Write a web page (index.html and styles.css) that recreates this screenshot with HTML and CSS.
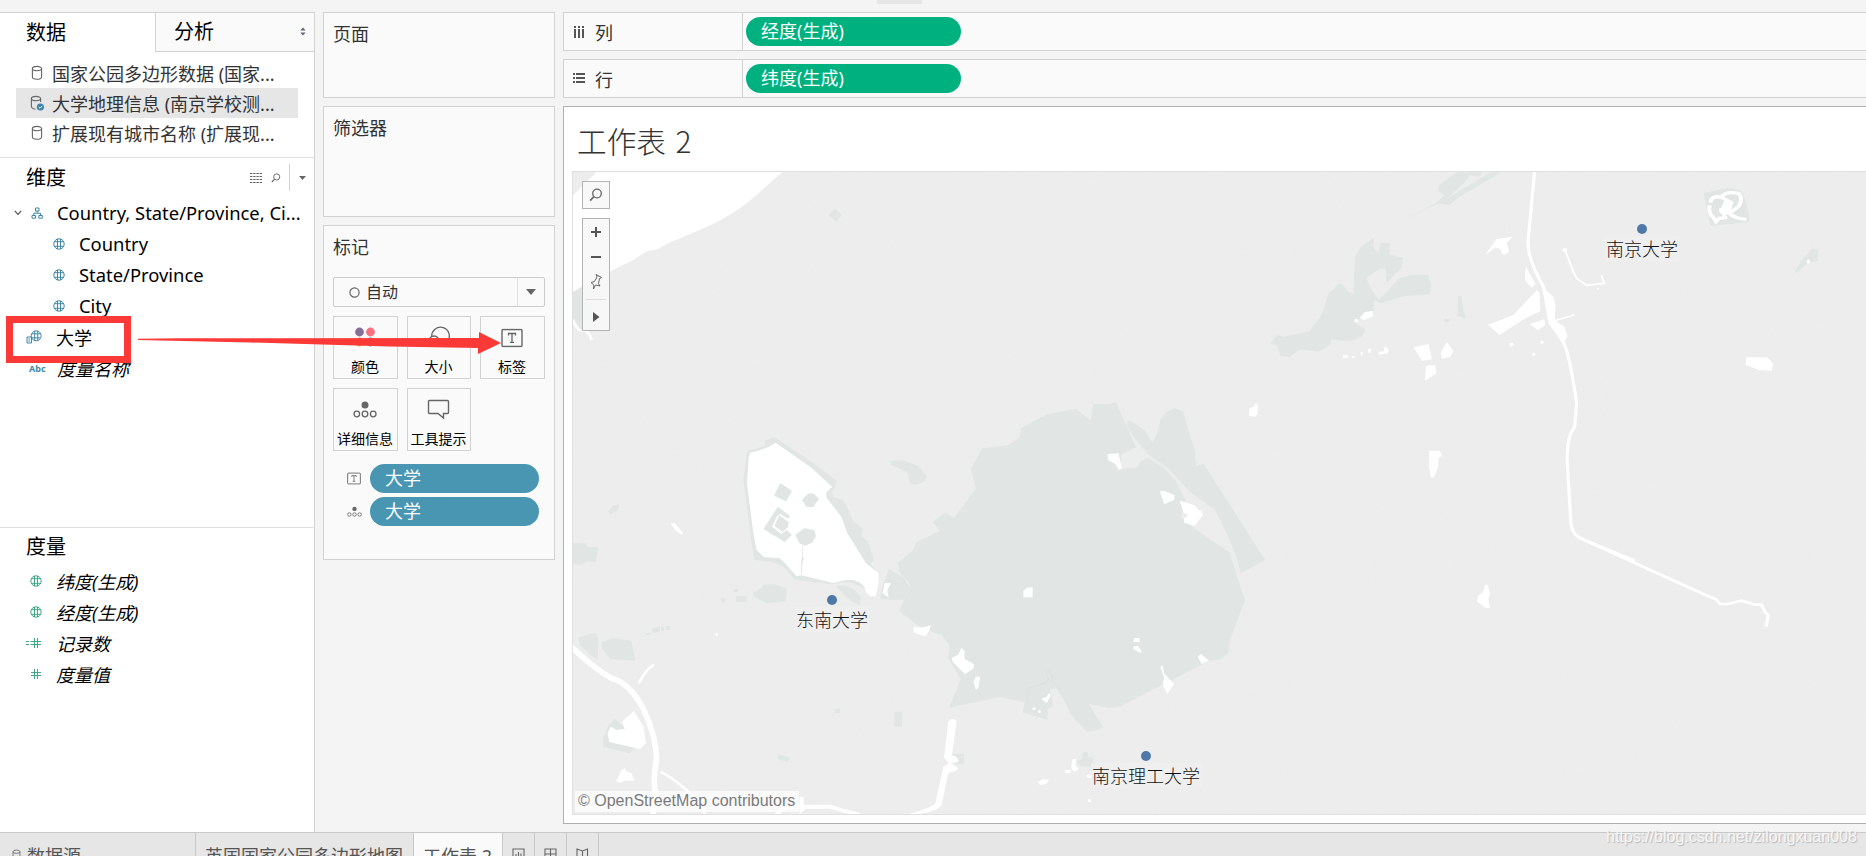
FILE: index.html
```html
<!DOCTYPE html>
<html lang="zh-CN">
<head>
<meta charset="utf-8">
<title>工作表 2</title>
<link rel="stylesheet" href="styles.css">
</head>
<body>
<svg class="defs" width="0" height="0">
  <defs>
    <symbol id="globe" viewBox="0 0 12 12"><g fill="none" stroke="currentColor" stroke-width="1"><circle cx="6" cy="6" r="5.2"/><path d="M1.6 3.7H10.4M1.6 8.3H10.4M4.5 .9V11.1M7.5 .9V11.1"/></g></symbol>
    <symbol id="db" viewBox="0 0 12 16"><g fill="none" stroke="#666" stroke-width="1.1"><ellipse cx="6" cy="3.6" rx="4.6" ry="2.2"/><path d="M1.4 3.6V12C1.4 15 10.6 15 10.6 12V3.6"/></g></symbol>
    <symbol id="hash" viewBox="0 0 12 12"><path d="M4.5 1V11M7.5 1V11M1 4.5H11M1 7.5H11" stroke="currentColor" fill="none"/></symbol>
    <symbol id="tbox" viewBox="0 0 22 19"><rect x="1" y="1" width="20" height="17" rx="1" fill="none" stroke="#666" stroke-width="1.4"/><path d="M7.5 7V5H14.5V7M11 5V13.6M9 13.8H13" fill="none" stroke="#666" stroke-width="1.3"/></symbol>
    <symbol id="dots" viewBox="0 0 24 18"><circle cx="12" cy="4" r="3.5" fill="#666"/><g fill="none" stroke="#666" stroke-width="1.3"><circle cx="3.8" cy="13" r="2.8"/><circle cx="12" cy="13" r="2.8"/><circle cx="20.2" cy="13" r="2.8"/></g></symbol>
    <symbol id="search" viewBox="0 0 14 14"><g fill="none" stroke="#666"><circle cx="8" cy="5.5" r="4.3" stroke-width="1.3"/><path d="M5 8.5L1.2 12.6" stroke-width="1.6"/></g></symbol>
  </defs>
</svg>
<div class="app">
  <div class="workspace">
    <aside class="data-pane">
      <div class="pane-tabs">
        <div class="pane-tab">数据</div>
        <div class="pane-tab pane-tab-off">分析
          <svg class="sorter" width="6" height="9" viewBox="0 0 6 9"><path d="M3 .5L5.7 3.6H.3ZM3 8.5L5.7 5.4H.3Z" fill="#5f6b78"/></svg>
        </div>
      </div>
      <ul class="sources">
        <li><svg class="db"><use href="#db"/></svg>国家公园多边形数据 (国家...</li>
        <li class="selected"><svg class="db" viewBox="0 0 14 16"><path d="M10.6 7V3.6M1.4 3.6V12Q2.6 14.2 5.4 14.2" fill="none" stroke="#666" stroke-width="1.1"/><ellipse cx="6" cy="3.6" rx="4.6" ry="2.2" fill="none" stroke="#666" stroke-width="1.1"/><circle cx="10.4" cy="12" r="3.6" fill="#3b84a9"/><path d="M8.6 12L10 13.3L12.3 10.8" fill="none" stroke="#fff"/></svg>大学地理信息 (南京学校测...</li>
        <li><svg class="db"><use href="#db"/></svg>扩展现有城市名称 (扩展现...</li>
      </ul>
      <section class="dimensions">
        <header class="section-head">
          <h2>维度</h2>
          <svg class="grid-icon" width="12" height="10" viewBox="0 0 12 10"><path d="M0 .5H12M0 3.5H12M0 6.5H12M0 9.5H12" stroke="#666" stroke-dasharray="2.4 .8"/></svg>
          <svg class="find-icon" width="10" height="10"><use href="#search"/></svg>
          <i class="rule"></i>
          <svg class="caret" width="7" height="4" viewBox="0 0 7 4"><path d="M0 0H7L3.5 4Z" fill="#666"/></svg>
        </header>
        <ul class="fields latin">
          <li class="group"><svg class="chevron" width="8" height="6" viewBox="0 0 8 6"><path d="M.8 .8L4 4.4L7.2 .8" fill="none" stroke="#555" stroke-width="1.2"/></svg><svg class="tree" width="12" height="12" viewBox="0 0 12 12"><path d="M4.5 1H8V4H4.5ZM1 8.5H4.5V11.2H1ZM7.8 8.5H11.3V11.2H7.8ZM6.2 4V6.2M2.8 8.5V6.2H9.5V8.5" fill="none" stroke="#3f88a8"/></svg><span>Country, State/Province, Ci...</span></li>
          <li class="child"><svg class="ico"><use href="#globe"/></svg><span>Country</span></li>
          <li class="child"><svg class="ico"><use href="#globe"/></svg><span>State/Province</span></li>
          <li class="child"><svg class="ico"><use href="#globe"/></svg><span>City</span></li>
          <li class="school"><svg width="16" height="14" viewBox="0 0 16 14"><g fill="none" stroke="currentColor"><circle cx="10.2" cy="5.8" r="5"/><path d="M5.8 3.8H14.6M6 7.8H14.4M8.700 1V10.6M11.700 1V10.6"/><path d="M1 7H5.5V13H1Z" fill="#fff"/><path d="M2.3 9H4.2M2.3 11H4.2"/></g></svg><span>大学</span></li>
          <li class="names"><b>Abc</b><span>度量名称</span></li>
        </ul>
      </section>
      <section class="measures">
        <h2>度量</h2>
        <ul class="fields">
          <li><svg class="ico"><use href="#globe"/></svg><span>纬度(生成)</span></li>
          <li><svg class="ico"><use href="#globe"/></svg><span>经度(生成)</span></li>
          <li><svg class="ico wide" viewBox="0 0 16 12"><path d="M0 4.5H3M0 7.5H3M8.5 1V11M11.5 1V11M4.5 4.5H15M4.5 7.5H15" stroke="currentColor" fill="none"/></svg><span>记录数</span></li>
          <li><svg class="ico"><use href="#hash"/></svg><span>度量值</span></li>
        </ul>
      </section>
    </aside>

    <div class="cards">
      <section class="card pages">页面</section>
      <section class="card filters">筛选器</section>
      <section class="card marks">
        <h3>标记</h3>
        <div class="mark-type">
          <div class="mark-value"><svg width="11" height="11"><circle cx="5.5" cy="5.5" r="4.6" fill="none" stroke="#666" stroke-width="1.2"/></svg>自动</div>
          <svg class="mark-caret" width="10" height="6" viewBox="0 0 10 6"><path d="M0 0H10L5 6Z" fill="#666"/></svg>
        </div>
        <div class="mark-grid">
          <div class="mark-btn"><svg width="24" height="22"><circle cx="6.5" cy="6" r="4.4" fill="#86709b"/><circle cx="17.5" cy="6" r="4.4" fill="#f9707f"/><circle cx="6.5" cy="16" r="4.4" fill="#f6a04d"/><circle cx="17.5" cy="16" r="4.4" fill="#7087b5"/></svg>颜色</div>
          <div class="mark-btn"><svg width="24" height="22"><path d="M4.8 11A8.8 8.8 0 1 1 20 16" fill="none" stroke="#666" stroke-width="1.3"/><circle cx="7" cy="15" r="5" fill="none" stroke="#666" stroke-width="1.3"/></svg>大小</div>
          <div class="mark-btn"><svg width="22" height="22" viewBox="0 -2.5 22 22"><use href="#tbox" width="22" height="19"/></svg>标签</div>
          <div class="mark-btn"><svg width="24" height="22"><use href="#dots" y="3" width="24" height="18"/></svg>详细信息</div>
          <div class="mark-btn"><svg width="24" height="22"><path d="M2.5 2.5H20.5Q21.5 2.5 21.5 3.5V14.5Q21.5 15.5 20.5 15.5H16.5V20L11 15.5H2.5Q1.5 15.5 1.5 14.5V3.5Q1.5 2.5 2.5 2.5Z" fill="none" stroke="#666" stroke-width="1.4"/></svg>工具提示</div>
        </div>
        <div class="mark-pills">
          <div class="mark-row"><svg width="14" height="13"><use href="#tbox"/></svg><div class="pill blue">大学</div></div>
          <div class="mark-row"><svg width="15" height="12"><use href="#dots"/></svg><div class="pill blue">大学</div></div>
        </div>
      </section>
    </div>

    <main class="main">
      <div class="shelf">
        <div class="shelf-name"><svg width="12" height="12"><path d="M2 0V2M6 0V2M10 0V2M2 3V12M6 3V12M10 3V12" stroke="#555" stroke-width="2"/></svg>列</div>
        <div class="pill green">经度(生成)</div>
      </div>
      <div class="shelf">
        <div class="shelf-name"><svg width="12" height="12"><path d="M0 1H2M0 5H2M0 9H2M3 1H12M3 5H12M3 9H12" stroke="#555" stroke-width="2"/></svg>行</div>
        <div class="pill green">纬度(生成)</div>
      </div>
      <section class="sheet">
        <h1>工作表 2</h1>
        <div class="map">
          <svg class="map-svg" width="1293" height="642" viewBox="573 172 1293 642">
            <defs>
              <filter id="grain" x="0" y="0" width="100%" height="100%"><feTurbulence type="fractalNoise" baseFrequency=".35" numOctaves="2" seed="4"/><feColorMatrix values="0 0 0 0 .8  0 0 0 0 .82  0 0 0 0 .82  1.8 0 0 0 -.95"/></filter>
            </defs>
            <rect x="573" y="172" width="1293" height="642" fill="#ededed"/>
            <rect x="573" y="172" width="1293" height="642" filter="url(#grain)" opacity=".5"/>
            <!-- north-west -->
            <g transform="translate(555 0) scale(.33333)">
              <path class="w" d="M125 516H682L590 598Q540 640 470 674L335 732L308 748L275 754L235 780L185 804L100 850L50 878V590Z"/>
              <path class="p" d="M54 876L84 858L110 850V990H80L54 955ZM838 626L861 644L844 665L821 646Z"/>
              <path class="l" stroke-width="8" d="M54 960Q65 995 85 992Q100 990 110 1020"/>
            </g>
            <!-- west and lake -->
            <g transform="translate(560 400) scale(.33333)">
              <path class="p" d="M562 153L615 138L613 122L642 112L660 122L755 186L830 242L826 260L816 274L820 292L850 300L880 362L908 388L905 408L924 425L942 482L930 490L958 525L954 560L938 597L918 570Q885 545 852 546L816 553L705 540L668 497L645 488L583 479L575 430L550 240Z"/>
              <path class="w" d="M570 158Q610 152 647 128L755 204L816 260L798 278L800 294L845 352L862 400L918 490L956 520V550L947 588L933 591L917 575Q915 550 880 540L857 540L820 549L725 526L709 528L675 490L658 474L612 472L590 450L580 400L561 250L566 175Z"/>
              <path class="p" d="M661 249L696 273L678 304L642 287ZM654 320L690 348L684 356L660 341L650 350L636 380L664 403L680 390L696 404L674 426L610 387ZM658 346L686 366L684 382L668 395L643 378ZM725 302L740 284Q755 276 765 284L778 298Q765 310 761 321Q750 322 738 320Q733 306 725 302ZM706 404L733 385L763 390L768 408L757 428L735 437L718 430ZM727 437V470L724 480L723 525H725L728 482L732 476L729 468V437Z"/>
              <path class="p" d="M990 183L1028 180L1076 198L1101 230Q1095 250 1062 255L1048 245L1044 218L994 195ZM828 558Q880 550 903 595L900 616Q870 605 848 580ZM987 508L1030 532L1048 560L1030 600L960 597L972 545Z"/>
              <path class="p" d="M38 428L75 430L85 441L115 442L107 486L80 485L62 495L38 492ZM145 334L158 318L175 313L178 324L169 334L150 342ZM55 712L106 698L114 710V780L92 766L58 732ZM126 727L160 714L214 722L226 782L150 777L127 746ZM579 578L605 564L610 553H645L665 561L680 566L678 605L622 610L585 592ZM528 588H560V606H528ZM481 595L492 592L498 602L488 610ZM523 567H534V576H523ZM275 684L300 681V696L278 699ZM303 681H312V692H303ZM318 678H331V690H318ZM257 699H272V705H257ZM1003 935H1026V980H1003ZM823 926H840V939H823ZM657 1063L688 1074L685 1086L653 1077ZM1175 1062H1212V1093H1185ZM146 975L165 957L250 1035L225 1040L210 1060L130 1040V1012Z"/>
              <path class="w" d="M152 980L170 990L194 986L186 965L221 933L250 978L258 1030L240 1047L190 1036L148 1026L143 1000ZM168 1144L185 1110L194 1104L200 1115L214 1120L224 1142H194L182 1148ZM332 370H344L369 398L365 405L345 390ZM466 700L474 699L473 708L466 707ZM974 549H993L982 570L986 593L968 580Z"/>
              <path class="l" stroke-width="17" stroke-linejoin="round" d="M34 740Q95 800 155 835Q210 850 252 930Q289 1010 290 1080Q278 1130 286 1180L278 1250"/>
              <path class="l" stroke-width="8" d="M236 850Q260 805 282 795M302 1115Q350 1140 400 1190L432 1200V1245"/>
              <path class="l" stroke-width="12" d="M650 1245Q670 1218 705 1220H810L850 1232L900 1245M725 1190V1230L738 1218"/>
              <path class="w" d="M1165 964Q1180 950 1190 964L1176 1066Q1194 1068 1196 1086L1172 1089L1194 1104Q1190 1115 1165 1118L1145 1216Q1125 1242 1040 1244Q1120 1222 1126 1210L1150 1100L1166 1090L1152 1073Z"/>
            </g>
            <!-- Purple Mountain park -->
            <g transform="translate(900 380) scale(.33333)">
              <path class="p" d="M580 72H628L648 66L708 202L666 222L660 268L712 262L722 244L742 233L790 262L826 300L856 360L842 412L890 450L988 517L1035 661L990 780L984 820L962 838L926 844L808 904L740 938L660 980L625 984L566 972L609 1040L600 1048L562 1056L515 1008L490 957L470 925L450 926L460 980L445 984L442 1020L368 997L374 967L300 951L147 983L182 898L145 835L149 796L125 766L60 742L-2 694L30 612L-2 575L-14 494L35 516L50 486L120 452L97 425L136 398L162 414L228 325L212 267L247 205L325 196L358 172L364 144L436 104L528 86L572 122Z"/>
              <path class="p" d="M682 122L696 124L735 152L757 188Q774 165 781 120L800 96L823 84L850 95L862 140L876 185L885 210L888 258L911 252L1096 541L1022 580L1010 530L980 460L945 390L870 336L806 266L742 222L700 168L682 138ZM548 1116H564V1132H578V1160H545L528 1144L546 1138Z"/>
              <path d="M-14 490L36 514L-14 553Z" fill="#ededed"/>
              <path d="M383 970V926L438 908L445 898L438 875L446 866L455 884V904L480 928" fill="none" stroke="#d8dedd" stroke-width="2"/>
              <path class="w" d="M623 222L655 220L666 265L656 270L646 252L624 240ZM780 334L792 332L824 346L822 360L792 373ZM840 362L884 376L895 390H904L908 406L884 438L852 428V415L866 406L850 397ZM370 632L382 623L398 622V652H370ZM40 742L70 742L92 736L88 752L76 769L42 758ZM156 833L174 824L184 804L194 813L193 836L222 853L220 866L195 882L158 846ZM227 890L240 890L236 922L228 930L220 908ZM424 957L440 950L447 938L452 946L440 970ZM397 984L405 981L407 989L398 991ZM413 993L420 990L424 997L417 1000ZM703 774H718L719 786H700ZM700 800L714 798L725 814L722 819L700 808ZM781 862L788 855L792 880L822 912L802 942L788 915L792 890ZM893 830L903 822L927 842L905 852ZM1048 92L1060 86L1064 72L1074 74L1072 104L1062 110L1048 107ZM516 1138L529 1136L526 1156L536 1166L524 1176L514 1165ZM495 1170H512V1179H495Z"/>
            </g>
            <!-- north-east -->
            <g transform="translate(1240 160) scale(.39936 .33333)">
              <path class="p" d="M336 232L334 262L346 280L352 248L376 249L374 282L392 290L408 292L405 322L368 368L364 326L352 324L316 354L330 390L348 420L400 354L428 345L470 344L478 370L476 403L412 408L352 430L336 420L334 452L300 475L290 490L314 508L306 530L276 544L228 538L226 556L196 575L150 568L125 592L102 588L92 558L76 550L92 526L110 530L175 513L205 462L222 400L252 368L272 396L300 408L284 400L288 290L302 262ZM545 408H555L560 455L566 476L545 468ZM512 476H525V487H512Z"/>
              <path class="p" d="M410 180L438 162L490 130L512 106L495 92L500 74L530 46L548 34H608L600 50L575 46L560 70L518 116L628 36H655L548 112L524 136L500 130L466 146ZM1161 100L1218 84L1254 90Q1275 135 1275 185L1178 198ZM1387 340L1408 298L1435 263L1448 270L1446 302L1420 310L1400 334Z"/>
              <path class="l" stroke-width="10" d="M1178 128Q1180 105 1205 112Q1215 92 1248 100Q1262 115 1248 140L1225 160Q1240 176 1268 178M1176 136Q1172 160 1185 172L1192 185L1200 175L1220 172M1206 112L1230 128L1216 150L1200 150"/>
              <path class="w" d="M1214 120L1235 130L1228 155L1212 170L1200 155ZM1418 304L1424 297L1428 306L1422 312Z"/>
              <path class="l" stroke-width="8" stroke-linejoin="round" d="M738 30L722 235Q716 290 760 380L775 480L810 548Q825 580 843 730L838 800Q815 835 820 920L829 1095Q835 1130 860 1138L990 1203"/>
              <path class="w" d="M715 318L740 372L730 384L714 360ZM744 390L750 400L752 454L715 475L650 525L621 494L684 466ZM762 386L784 410L790 435L788 480L812 500L820 528L810 550L772 490ZM726 492L762 478L764 496L746 511ZM614 284L642 238L682 230L668 248L674 275L660 286L650 266L640 262ZM300 474L312 457L332 452L334 468L312 480ZM434 562L472 552L481 598L456 602ZM503 576L518 546L534 574L526 590L505 597ZM466 618L488 615L492 640L463 662ZM674 550L682 547L687 555L678 561ZM752 544L758 542L761 549L754 552ZM731 580H739V587H731ZM24 744L36 740L42 732L44 748L40 770L22 766ZM474 872H500L506 886L497 895L496 920L486 952H478L473 920ZM1268 592L1320 592L1335 610L1332 632L1300 630L1266 614ZM258 586H270V594H258ZM281 588H287V594H281ZM302 577H308V584H302ZM321 567H328V578H321ZM346 576L360 574L362 558L373 570L370 580L348 584ZM287 477H295V487H287Z"/>
              <path class="l" stroke-width="5" d="M813 265Q828 320 843 355L868 376L912 370L905 345M780 485L837 464M894 386H899"/><circle class="w" cx="813" cy="270" r="6"/>
            </g>
            <!-- south-east -->
            <g transform="translate(1240 540) scale(.39936 .33333)">
              <path class="l" stroke-width="8" d="M858 -2L1160 162L1192 178L1202 192H1222L1256 182L1290 194H1306L1314 215L1323 226L1317 260"/>
              <path class="w" d="M613 135H620L626 160L622 178L626 203L616 204L594 185L596 167L609 157Z"/>
            </g>
            <path class="w" d="M1038 782L1043 779L1049 780L1046 784L1040 785ZM1087 775H1091V778H1087ZM1088 799H1091V802H1088Z"/>
            <g fill="#efefef"><rect x="795" y="607" width="74" height="25"/><rect x="1605" y="236" width="74" height="25"/><rect x="1091" y="763" width="111" height="25"/></g>
            <g fill="#4e79a7"><circle cx="832" cy="600" r="5"/><circle cx="1642" cy="229" r="5"/><circle cx="1146" cy="756" r="5"/></g>
            <g class="map-label"><text x="832" y="627">东南大学</text><text x="1642" y="256">南京大学</text><text x="1146" y="783">南京理工大学</text></g>
          </svg>
          <div class="map-tools">
            <div class="tool-box"><svg width="14" height="14"><use href="#search"/></svg></div>
            <div class="tool-box zoomers">
              <svg width="26" height="111" viewBox="0 0 26 111"><path d="M8 13H18M13 8V18M8 38H18" stroke="#555" stroke-width="2"/><path d="M13 55.5L18.5 58.5L16.5 59.5L15.5 64.5L17 67L12.5 66L10.5 70L10.8 66L8 63.5L11.5 62.5L14 58Z" fill="none" stroke="#666"/><path d="M3 80.5H23" stroke="#ddd"/><path d="M10 93L16.5 98L10 103Z" fill="#555"/></svg>
            </div>
          </div>
          <div class="credit">© OpenStreetMap contributors</div>
        </div>
      </section>
    </main>
  </div>

  <footer class="sheet-tabs">
    <div class="st source-tab"><svg width="9" height="14" viewBox="0 0 12 16"><use href="#db"/></svg>数据源</div>
    <div class="st uk-tab">英国国家公园多边形地图</div>
    <div class="st active-tab">工作表 2</div>
    <div class="st add-tab"><svg width="13" height="13"><path d="M12 9V1H1V12H8M4 9V6M6.5 9V4M9 9V5.5M9 11.5H13M11 9.5V13" fill="none" stroke="#666" stroke-width="1.1"/></svg></div>
    <div class="st add-tab"><svg width="13" height="13"><path d="M12 8V1H1V11H8M1 6H12M6.5 1V11M9 11.5H13M11 9.5V13" fill="none" stroke="#666" stroke-width="1.1"/></svg></div>
    <div class="st add-tab"><svg width="13" height="13"><path d="M11.5 8V1L6.5 3L1 1V11L6.5 12V3M9 11.5H13M11 9.5V13" fill="none" stroke="#666" stroke-width="1.1"/></svg></div>
  </footer>

  <i class="top-handle"></i>
  <i class="red-frame"></i>
  <svg class="red-arrow" width="364" height="24" viewBox="138 331 364 24"><path d="M138 338.8L180 338.3L479 338V332L501 343L478 354V348L390 346.5L250 342.5L138 340Z" fill="#fb3a38"/></svg>
  <div class="watermark">https://blog.csdn.net/zilongxuan008</div>
</div>
</body>
</html>
```
FILE: styles.css
```css
* { box-sizing: border-box; }
html, body { margin: 0; height: 856px; overflow: hidden; }
body { font-family: "Noto Sans", "Noto Sans CJK SC", sans-serif; font-size: 18px; color: #333; background: #f4f4f4; }
ul { list-style: none; margin: 0; padding: 0; }
h1, h2, h3 { margin: 0; font-weight: 400; }
svg { display: block; flex: none; }
.defs { position: absolute; }
.app { position: relative; height: 856px; overflow: hidden; }
.workspace { display: flex; height: 832px; padding-top: 12px; }

.data-pane { width: 315px; flex: none; display: flex; flex-direction: column; background: #fff; border-top: 1px solid #d2d2d2; border-right: 1px solid #d2d2d2; }
.pane-tabs { display: flex; height: 39px; font-size: 20px; line-height: 40px; color: #000; }
.pane-tab { width: 155px; padding-left: 26px; }
.pane-tab-off { width: 159px; display: flex; align-items: center; justify-content: space-between; padding: 0 8px 0 18px; background: #fafafa; border-left: 1px solid #d2d2d2; border-bottom: 1px solid #d2d2d2; }
.sorter { margin-top: -2px; }
.sources { height: 105px; padding: 6px 16px 0; }
.sources li { display: flex; align-items: center; height: 30px; padding-left: 14px; gap: 8px; white-space: nowrap; }
.sources .selected { background: #e6e6e6; }
.db { width: 14px; height: 16px; }
.dimensions { height: 370px; border-top: 1px solid #e0e0e0; color: #000; }
.section-head { display: flex; align-items: center; height: 39px; padding: 0 8px 0 26px; }
h2 { font-size: 20px; line-height: 40px; color: #000; }
.grid-icon { margin-left: auto; }
.find-icon { margin-left: 9px; }
.rule { width: 1px; height: 27px; margin: 0 9px 0 8px; background: #d2d2d2; }
.fields li { display: flex; align-items: center; height: 31.1px; padding-left: 31px; color: #000; white-space: nowrap; }
.fields .ico { width: 12px; height: 12px; margin-right: 14px; }
.latin { font-size: 18.4px; }
.dimensions .fields svg { color: #3f88a8; }
.dimensions .group { padding-left: 14px; }
.chevron { margin-right: 9px; }
.tree { margin-right: 14px; }
.dimensions .child { padding-left: 53px; }
.dimensions .school { padding-left: 26px; gap: 14px; font-size: 18px; }
.dimensions .names { padding-left: 29px; font-size: 18px; }
.names b { width: 28px; font-size: 9px; color: #3f88a8; }
.names span, .measures span { font-style: italic; }
.measures { flex: 1; border-top: 1px solid #e0e0e0; }
.measures h2 { padding-left: 26px; line-height: 37px; }
.measures .fields li { padding-left: 30px; }
.measures .fields svg { color: #3fa985; }
.measures .fields .wide { width: 16px; margin-left: -4px; }

.cards { width: 232px; margin: 0 8px; flex: none; display: flex; flex-direction: column; gap: 8px; }
.card { padding: 8px 9px 9px; border: 1px solid #d2d2d2; background: #fafafa; line-height: 27px; }
.pages { height: 86px; }
.filters { height: 111px; }
.marks { height: 335px; }
h3 { font-size: 18px; line-height: 27px; }
.mark-type { display: flex; align-items: center; height: 30px; margin-top: 16px; border: 1px solid #ccc; border-radius: 2px; font-size: 16px; }
.mark-value { display: flex; align-items: center; width: 186px; height: 28px; gap: 6px; padding-left: 15px; border-right: 1px solid #e0e0e0; }
.mark-caret { margin: 0 8px; }
.mark-grid { display: grid; grid-template-columns: 65px 64px 65px; gap: 9px; margin-top: 9px; }
.mark-btn { display: flex; flex-direction: column; align-items: center; height: 63px; padding: 9px 1px 0 0; border: 1px solid #d2d2d2; font-size: 14px; line-height: 20px; gap: 9px; color: #000; white-space: nowrap; }
.mark-pills { display: flex; flex-direction: column; gap: 4px; margin-top: 13px; padding-left: 14px; }
.mark-row { display: flex; align-items: center; justify-content: space-between; padding-right: 6px; }
.pill { height: 29px; border-radius: 15px; padding-left: 15px; line-height: 28px; color: #fff; }
.blue { width: 169px; background: #4996b2; }
.green { width: 215px; margin-left: 3px; background: #00b180; }

.main { flex: 1; min-width: 0; display: flex; flex-direction: column; gap: 8px; }
.shelf { display: flex; align-items: center; height: 39px; background: #fafafa; border: 1px solid #d2d2d2; border-right: 0; }
.shelf-name { display: flex; align-items: center; width: 179px; height: 37px; padding-left: 9px; gap: 10px; border-right: 1px solid #d2d2d2; }
.sheet { height: 718px; padding: 0 0 0 8px; background: #fff; border: 1px solid #b0b0b0; border-right: 0; }
h1 { height: 64px; padding-left: 5px; font-family: "Noto Sans CJK SC", sans-serif; font-size: 29.7px; font-weight: 300; line-height: 68px; word-spacing: 3px; color: #333; }
.map { position: relative; height: 644px; border: 1px solid #e0e0e0; border-right: 0; overflow: hidden; }
.p { fill: #e1e6e4; }
.w { fill: #fff; }
.l { fill: none; stroke: #fff; }
.map-label { font-family: "Noto Sans CJK SC", sans-serif; font-size: 18px; font-weight: 300; text-anchor: middle; fill: #111; }
.map-tools { position: absolute; left: 9px; top: 9px; display: flex; flex-direction: column; gap: 9px; }
.tool-box { display: flex; align-items: center; justify-content: center; width: 28px; height: 28px; border: 1px solid #b4b4b4; background: rgba(247, 247, 247, .9); }
.zoomers { height: 113px; }
.credit { position: absolute; left: 2px; bottom: 2px; width: 224px; height: 21px; padding-left: 3px; font: 16px/19px "Liberation Sans", Arial, sans-serif; color: #7b7b7b; background: rgba(255, 255, 255, .7); white-space: nowrap; }

.sheet-tabs { display: flex; height: 44px; border-top: 1px solid #c8c8c8; background: #e6e6e6; color: #555; white-space: nowrap; }
.st { display: flex; align-items: center; border-right: 1px solid #c8c8c8; }
.source-tab { width: 196px; padding-left: 12px; gap: 6px; }
.uk-tab { width: 218px; padding-left: 9px; }
.active-tab { width: 89px; padding-left: 9px; background: #fafafa; }
.add-tab { width: 32px; justify-content: center; }

.top-handle { position: absolute; left: 877px; top: 0; width: 45px; height: 4px; background: #e6e6e6; }
.red-frame { position: absolute; left: 6px; top: 316px; width: 125px; height: 47px; border: 7px solid #fb3a38; }
.red-arrow { position: absolute; left: 138px; top: 331px; }
.watermark { position: absolute; left: 1606px; top: 827px; font: 16px/20px "Liberation Sans", Arial, sans-serif; color: #f6f6f6; text-shadow: 1px 1px 1px #b8b8b8; }
```
